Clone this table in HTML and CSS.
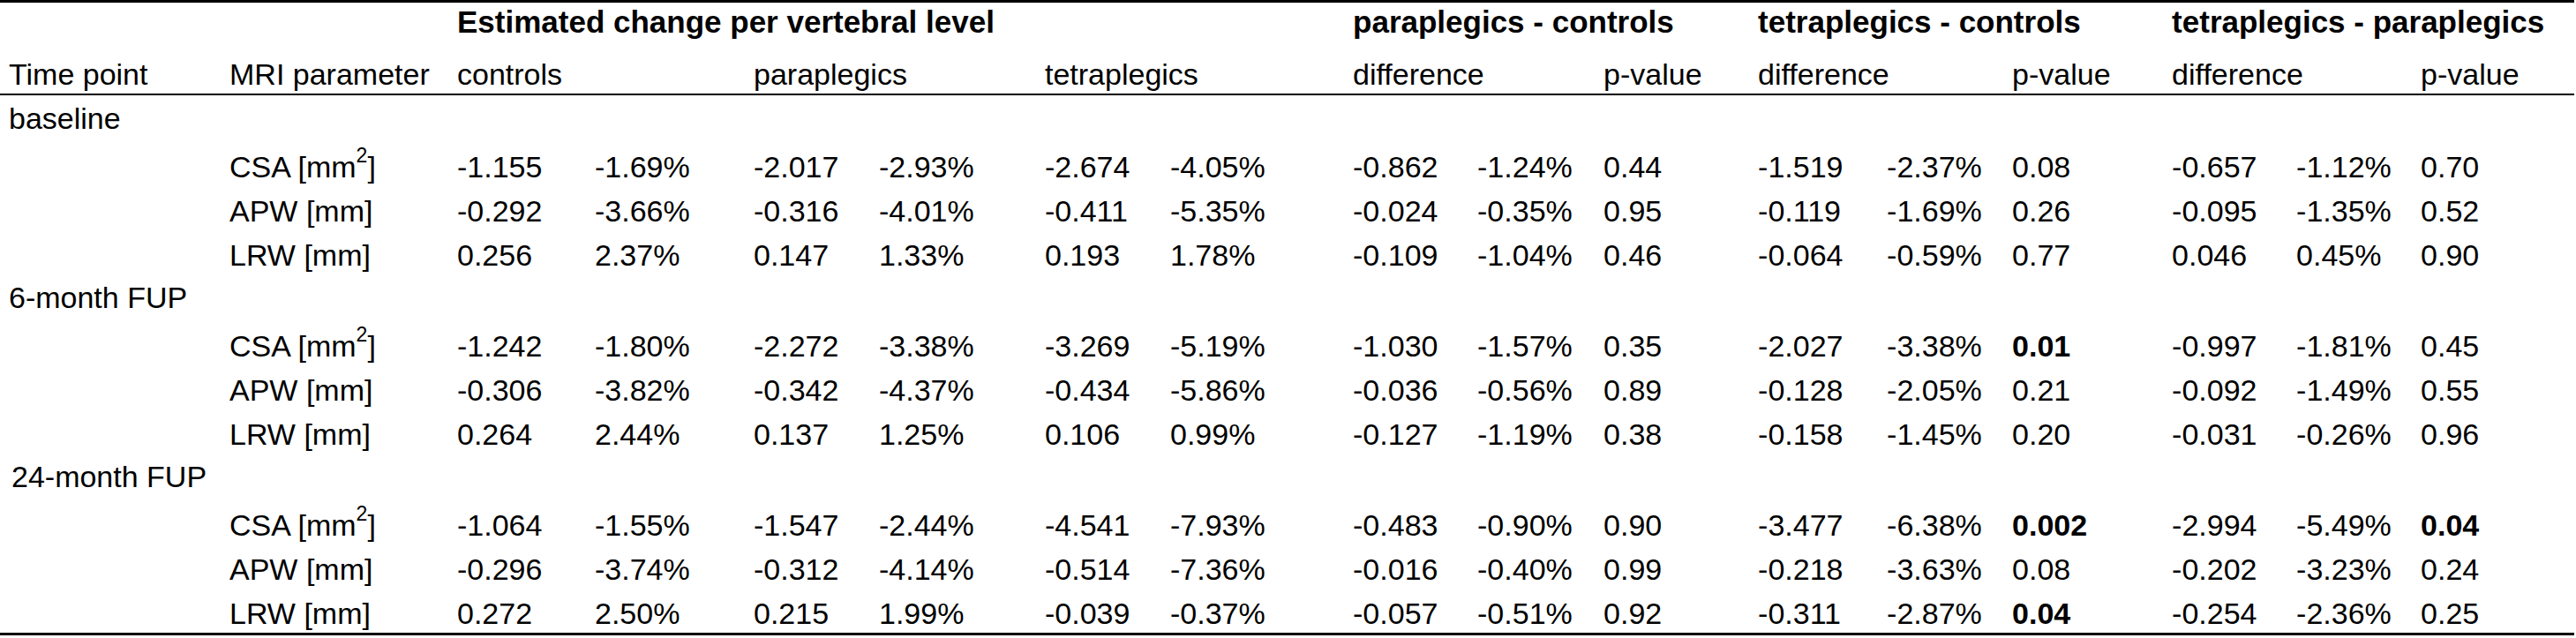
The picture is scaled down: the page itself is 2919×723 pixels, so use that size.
FILE: index.html
```html
<!DOCTYPE html>
<html lang="en">
<head>
<meta charset="utf-8">
<title>Estimated change per vertebral level</title>
<link rel="stylesheet" href="styles.css">
</head>
<body>
<table class="results">
  <colgroup>
    <col class="w-time"><col class="w-param">
    <col class="w-c1"><col class="w-c2">
    <col class="w-p1"><col class="w-p2">
    <col class="w-t1"><col class="w-t2">
    <col class="w-d"><col class="w-pct"><col class="w-pv1">
    <col class="w-d2"><col class="w-pct2"><col class="w-pv2">
    <col class="w-d"><col class="w-d"><col class="w-pv3">
  </colgroup>
  <thead>
    <tr class="head-top">
      <th></th><th></th>
      <th colspan="6" class="bold">Estimated change per vertebral level</th>
      <th colspan="3" class="bold">paraplegics - controls</th>
      <th colspan="3" class="bold">tetraplegics - controls</th>
      <th colspan="3" class="bold">tetraplegics - paraplegics</th>
    </tr>
    <tr class="head-sub">
      <th>Time point</th><th>MRI parameter</th>
      <th colspan="2">controls</th>
      <th colspan="2">paraplegics</th>
      <th colspan="2">tetraplegics</th>
      <th colspan="2">difference</th><th>p-value</th>
      <th colspan="2">difference</th><th>p-value</th>
      <th colspan="2">difference</th><th>p-value</th>
    </tr>
  </thead>
  <tbody>
    <tr class="group"><td colspan="17">baseline</td></tr>
    <tr class="csa">
      <td></td><td>CSA [mm<sup>2</sup>]</td>
      <td>-1.155</td><td>-1.69%</td><td>-2.017</td><td>-2.93%</td><td>-2.674</td><td>-4.05%</td>
      <td>-0.862</td><td>-1.24%</td><td>0.44</td>
      <td>-1.519</td><td>-2.37%</td><td>0.08</td>
      <td>-0.657</td><td>-1.12%</td><td>0.70</td>
    </tr>
    <tr class="row">
      <td></td><td>APW [mm]</td>
      <td>-0.292</td><td>-3.66%</td><td>-0.316</td><td>-4.01%</td><td>-0.411</td><td>-5.35%</td>
      <td>-0.024</td><td>-0.35%</td><td>0.95</td>
      <td>-0.119</td><td>-1.69%</td><td>0.26</td>
      <td>-0.095</td><td>-1.35%</td><td>0.52</td>
    </tr>
    <tr class="row">
      <td></td><td>LRW [mm]</td>
      <td>0.256</td><td>2.37%</td><td>0.147</td><td>1.33%</td><td>0.193</td><td>1.78%</td>
      <td>-0.109</td><td>-1.04%</td><td>0.46</td>
      <td>-0.064</td><td>-0.59%</td><td>0.77</td>
      <td>0.046</td><td>0.45%</td><td>0.90</td>
    </tr>
    <tr class="group"><td colspan="17">6-month FUP</td></tr>
    <tr class="csa">
      <td></td><td>CSA [mm<sup>2</sup>]</td>
      <td>-1.242</td><td>-1.80%</td><td>-2.272</td><td>-3.38%</td><td>-3.269</td><td>-5.19%</td>
      <td>-1.030</td><td>-1.57%</td><td>0.35</td>
      <td>-2.027</td><td>-3.38%</td><td class="bold">0.01</td>
      <td>-0.997</td><td>-1.81%</td><td>0.45</td>
    </tr>
    <tr class="row">
      <td></td><td>APW [mm]</td>
      <td>-0.306</td><td>-3.82%</td><td>-0.342</td><td>-4.37%</td><td>-0.434</td><td>-5.86%</td>
      <td>-0.036</td><td>-0.56%</td><td>0.89</td>
      <td>-0.128</td><td>-2.05%</td><td>0.21</td>
      <td>-0.092</td><td>-1.49%</td><td>0.55</td>
    </tr>
    <tr class="row">
      <td></td><td>LRW [mm]</td>
      <td>0.264</td><td>2.44%</td><td>0.137</td><td>1.25%</td><td>0.106</td><td>0.99%</td>
      <td>-0.127</td><td>-1.19%</td><td>0.38</td>
      <td>-0.158</td><td>-1.45%</td><td>0.20</td>
      <td>-0.031</td><td>-0.26%</td><td>0.96</td>
    </tr>
    <tr class="group"><td colspan="17" class="indent">24-month FUP</td></tr>
    <tr class="csa">
      <td></td><td>CSA [mm<sup>2</sup>]</td>
      <td>-1.064</td><td>-1.55%</td><td>-1.547</td><td>-2.44%</td><td>-4.541</td><td>-7.93%</td>
      <td>-0.483</td><td>-0.90%</td><td>0.90</td>
      <td>-3.477</td><td>-6.38%</td><td class="bold">0.002</td>
      <td>-2.994</td><td>-5.49%</td><td class="bold">0.04</td>
    </tr>
    <tr class="row">
      <td></td><td>APW [mm]</td>
      <td>-0.296</td><td>-3.74%</td><td>-0.312</td><td>-4.14%</td><td>-0.514</td><td>-7.36%</td>
      <td>-0.016</td><td>-0.40%</td><td>0.99</td>
      <td>-0.218</td><td>-3.63%</td><td>0.08</td>
      <td>-0.202</td><td>-3.23%</td><td>0.24</td>
    </tr>
    <tr class="row last">
      <td></td><td>LRW [mm]</td>
      <td>0.272</td><td>2.50%</td><td>0.215</td><td>1.99%</td><td>-0.039</td><td>-0.37%</td>
      <td>-0.057</td><td>-0.51%</td><td>0.92</td>
      <td>-0.311</td><td>-2.87%</td><td class="bold">0.04</td>
      <td>-0.254</td><td>-2.36%</td><td>0.25</td>
    </tr>
  </tbody>
</table>
</body>
</html>
```

FILE: styles.css
```css
html, body {
  margin: 0;
  padding: 0;
  background: #ffffff;
}

.results {
  table-layout: fixed;
  width: 2917px;
  border-collapse: separate;
  border-spacing: 0;
  font-family: "Liberation Sans", Arial, sans-serif;
  font-size: 34px;
  line-height: 34px;
  color: #000000;
}

.results th,
.results td {
  padding: 0 0 5px 10px;
  text-align: left;
  font-weight: normal;
  vertical-align: bottom;
  white-space: nowrap;
  overflow: visible;
}

.results .bold {
  font-weight: bold;
}

.results th.bold {
  font-size: 35px;
}

.w-time { width: 250px; }
.w-param { width: 258px; }
.w-c1 { width: 156px; }
.w-c2 { width: 180px; }
.w-p1 { width: 142px; }
.w-p2 { width: 188px; }
.w-t1 { width: 142px; }
.w-t2 { width: 207px; }
.w-d { width: 141px; }
.w-pct { width: 143px; }
.w-pv1 { width: 175px; }
.w-d2 { width: 146px; }
.w-pct2 { width: 142px; }
.w-pv2 { width: 181px; }
.w-pv3 { width: 184px; }

.head-top { height: 48px; }
.head-top th {
  border-top: 3px solid #000;
  padding-bottom: 6px;
}

.head-sub { height: 60px; }
.head-sub th {
  border-bottom: 2px solid #000;
  padding-bottom: 5px;
}

.group { height: 48px; }
.csa { height: 55px; }
.row { height: 50px; }
.row.last { height: 53px; }
.row.last td {
  border-bottom: 3px solid #000;
}

.indent {
  text-indent: 3px;
}

.results sup {
  font-size: 23px;
  line-height: 0;
  vertical-align: 17px;
}
```
